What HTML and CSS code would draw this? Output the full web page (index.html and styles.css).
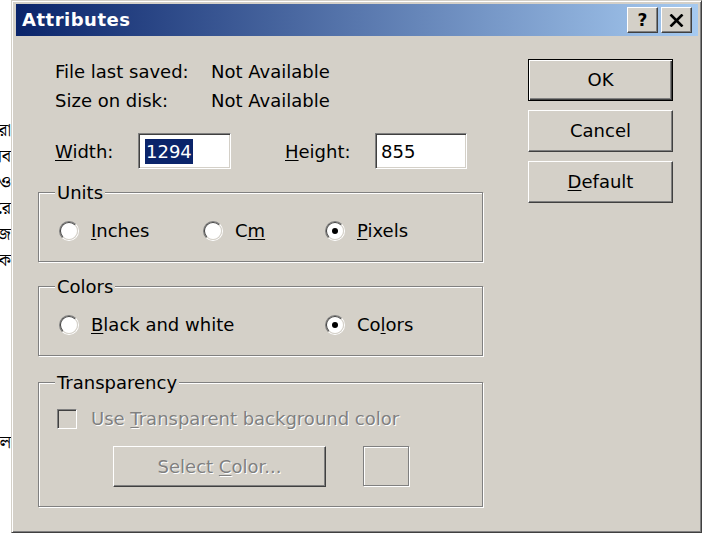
FILE: index.html
```html
<!DOCTYPE html>
<html lang="en">
<head>
<meta charset="utf-8">
<title>Attributes</title>
<link rel="stylesheet" href="styles.css">
</head>
<body>
<div class="page">
  <div class="backdrop" lang="bn">
    <p class="bn-line l1">আমরা</p>
    <p class="bn-line">সব</p>
    <p class="bn-line">ও</p>
    <p class="bn-line">রে</p>
    <p class="bn-line">কাজ</p>
    <p class="bn-line">এক</p>
    <p class="bn-line l7">সকল</p>
  </div>

  <div class="dialog">
    <div class="titlebar">
      <span class="title">Attributes</span>
      <div class="caption-btns">
        <span class="cap-btn help">?</span>
        <span class="cap-btn close">
          <svg width="15" height="13" viewBox="0 0 15 13"><path d="M1.5 0.5 L13.5 12.5 M13.5 0.5 L1.5 12.5" stroke="#000" stroke-width="2.6" fill="none"/></svg>
        </span>
      </div>
    </div>

    <div class="client">
      <div class="main">
        <div class="info">
          <span>File last saved:</span><span>Not Available</span>
          <span>Size on disk:</span><span>Not Available</span>
        </div>

        <div class="size-row">
          <div class="field field-w">
            <span class="lbl"><u>W</u>idth:</span>
            <span class="input"><span class="sel">1294</span></span>
          </div>
          <div class="field field-h">
            <span class="lbl"><u>H</u>eight:</span>
            <span class="input">855</span>
          </div>
        </div>

        <div class="group units">
          <span class="group-title">Units</span>
          <div class="opts">
            <span class="opt"><span class="radio"><span class="radio-in"></span></span><span><u>I</u>nches</span></span>
            <span class="opt"><span class="radio"><span class="radio-in"></span></span><span>C<u>m</u></span></span>
            <span class="opt"><span class="radio on"><span class="radio-in"></span></span><span><u>P</u>ixels</span></span>
          </div>
        </div>

        <div class="group colors">
          <span class="group-title">Colors</span>
          <div class="opts">
            <span class="opt bw"><span class="radio"><span class="radio-in"></span></span><span><u>B</u>lack and white</span></span>
            <span class="opt"><span class="radio on"><span class="radio-in"></span></span><span>Co<u>l</u>ors</span></span>
          </div>
        </div>

        <div class="group transparency">
          <span class="group-title">Transparency</span>
          <div class="check-row">
            <span class="checkbox"></span>
            <span class="disabled">Use <u>T</u>ransparent background color</span>
          </div>
          <div class="select-row">
            <span class="btn select-btn"><span class="disabled">Select <u>C</u>olor...</span></span>
            <span class="swatch"></span>
          </div>
        </div>
      </div>

      <div class="side">
        <span class="btn default">OK</span>
        <span class="btn">Cancel</span>
        <span class="btn"><u>D</u>efault</span>
      </div>
    </div>
  </div>
</div>
</body>
</html>
```

FILE: styles.css
```css
* { box-sizing: border-box; }

html, body {
  margin: 0;
  padding: 0;
  background: #fff;
}

.page {
  display: flex;
  width: 720px;
  height: 533px;
  overflow: hidden;
  background: #fff;
  font-family: "DejaVu Sans", "Liberation Sans", sans-serif;
  font-size: 18px;
  color: #000;
}

/* document text peeking out behind the dialog */
.backdrop {
  flex: none;
  width: 11px;
  overflow: hidden;
  padding-top: 118px;
  font-family: "Noto Serif Bengali", "Noto Sans Bengali", "Lohit Bengali", "FreeSerif", serif;
  font-size: 18px;
}
.bn-line {
  display: flex;
  justify-content: flex-end;
  white-space: nowrap;
  margin: 0;
  height: 26px;
  line-height: 26px;
}
.bn-line.l7 { margin-top: 156px; }

/* window frame */
.dialog {
  flex: none;
  width: 691px;
  height: 533px;
  background: #D4D0C8;
  border: 1px solid;
  border-color: #D4D0C8 #404040 #404040 #D4D0C8;
  box-shadow: inset 1px 1px 0 #fff, inset -1px -1px 0 #808080;
  padding: 3px 3px 2px 4px;
  display: flex;
  flex-direction: column;
}

.titlebar {
  height: 32px;
  flex: none;
  display: flex;
  align-items: center;
  justify-content: space-between;
  padding-left: 6px;
  background: linear-gradient(to right, #0A246A, #A6CAF0);
}
.title {
  color: #fff;
  font-weight: bold;
  font-size: 18px;
  letter-spacing: 0.5px;
  line-height: 32px;
}
.caption-btns {
  display: flex;
  gap: 3px;
  margin-right: 6px;
}
.cap-btn {
  width: 31px;
  height: 26px;
  display: flex;
  align-items: center;
  justify-content: center;
  background: #D4D0C8;
  border: 1px solid;
  border-color: #fff #404040 #404040 #fff;
  box-shadow: inset -1px -1px 0 #808080;
  font-weight: bold;
  font-size: 17px;
  line-height: 1;
}
.cap-btn.help { padding-top: 1px; }

/* client area */
.client {
  display: flex;
  padding: 21px 0 0 22px;
}
.main {
  width: 445px;
  flex: none;
}

.info {
  display: grid;
  grid-template-columns: 156px auto;
  padding-left: 17px;
  line-height: 29px;
}

.size-row {
  display: flex;
  align-items: center;
  margin-top: 18px;
  padding-left: 17px;
}
.field {
  display: flex;
  align-items: center;
}
.field-w .lbl { width: 83px; }
.field-h { margin-left: 54px; }
.field-h .lbl { width: 90px; }
.field-w .input { width: 93px; }
.field-h .input { width: 92px; }

.input {
  height: 36px;
  display: flex;
  align-items: center;
  padding-left: 5px;
  background: #fff;
  border: 1px solid;
  border-color: #808080 #fff #fff #808080;
  box-shadow: inset 1px 1px 0 #404040, inset -1px -1px 0 #D4D0C8;
  line-height: 25px;
}
.sel {
  background: #0A246A;
  color: #fff;
  padding: 0 1px 0 1px;
  margin-left: 1px;
}

u { text-decoration-thickness: 1px; text-underline-offset: 2px; }

/* etched group boxes */
.group {
  border: 1px solid #808080;
  box-shadow: inset 1px 1px 0 #fff, 1px 1px 0 #fff;
}
.group-title {
  display: table;
  margin: -11px 0 0 16px;
  padding: 0 2px;
  background: #D4D0C8;
  line-height: 22px;
}
.units { margin-top: 23px; height: 70px; }
.colors { margin-top: 24px; height: 70px; }
.transparency { margin-top: 26px; height: 125px; }

.opts {
  display: grid;
  grid-template-columns: 144px 122px auto;
  padding-left: 20px;
  margin-top: 16px;
}
.opt {
  display: flex;
  align-items: center;
  gap: 12px;
  line-height: 22px;
}
.opt.bw { grid-column: span 2; }

.radio {
  width: 20px;
  height: 20px;
  flex: none;
  border-radius: 50%;
  border: 1px solid;
  border-color: #808080 #fff #fff #808080;
  display: flex;
}
.radio-in {
  flex: 1;
  border-radius: 50%;
  border: 1px solid;
  border-color: #404040 #D4D0C8 #D4D0C8 #404040;
  background: #fff;
  display: flex;
  align-items: center;
  justify-content: center;
}
.radio.on .radio-in::after {
  content: "";
  width: 6px;
  height: 6px;
  border-radius: 50%;
  background: #000;
}

.check-row {
  display: flex;
  align-items: center;
  gap: 14px;
  margin-top: 14px;
  padding-left: 18px;
  line-height: 22px;
}
.checkbox {
  width: 20px;
  height: 20px;
  flex: none;
  background: #D4D0C8;
  border: 1px solid;
  border-color: #808080 #fff #fff #808080;
  box-shadow: inset 1px 1px 0 #404040, inset -1px -1px 0 #D4D0C8;
}
.disabled {
  color: #808080;
  text-shadow: 1px 1px 0 #fff;
}

.select-row {
  display: flex;
  gap: 37px;
  margin-top: 16px;
  padding-left: 74px;
}
.select-btn {
  width: 213px;
  height: 41px;
}
.swatch {
  width: 46px;
  height: 40px;
  border: 1px solid #808080;
  box-shadow: 1px 1px 0 #fff, inset 1px 1px 0 #fff;
}

/* push buttons */
.btn {
  display: flex;
  align-items: center;
  justify-content: center;
  background: #D4D0C8;
  border: 1px solid;
  border-color: #fff #404040 #404040 #fff;
  box-shadow: inset -1px -1px 0 #808080;
  line-height: 22px;
}
.side {
  display: flex;
  flex-direction: column;
  gap: 9px;
  margin: 2px 0 0 45px;
}
.side .btn {
  width: 145px;
  height: 42px;
}
.btn.default {
  border-color: #000;
  box-shadow: inset 1px 1px 0 #fff, inset -1px -1px 0 #404040, inset -2px -2px 0 #808080;
}
```
